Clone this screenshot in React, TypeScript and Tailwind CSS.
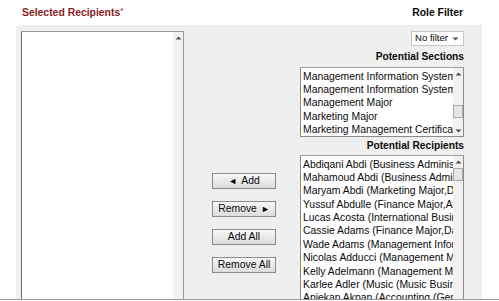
import React from 'react';

const sections = [
  'Management Information Systems Certificate',
  'Management Information Systems Major',
  'Management Major',
  'Marketing Major',
  'Marketing Management Certificate',
];

const recipients = [
  'Abdiqani Abdi (Business Administration)',
  'Mahamoud Abdi (Business Administration)',
  'Maryam Abdi (Marketing Major,Data)',
  'Yussuf Abdulle (Finance Major,Athletics)',
  'Lucas Acosta (International Business)',
  'Cassie Adams (Finance Major,Data)',
  'Wade Adams (Management Information)',
  'Nicolas Adducci (Management Major)',
  'Kelly Adelmann (Management Major)',
  'Karlee Adler (Music (Music Business))',
  'Aniekan Akpan (Accounting (General))',
];

function UpArrow() {
  return (
    <svg width="7" height="4" viewBox="0 0 7 4" className="block">
      <path d="M0.5 3.5 L3.5 0.5 L6.5 3.5 Z" fill="#505050" />
    </svg>
  );
}

function DownArrow() {
  return (
    <svg width="7" height="4" viewBox="0 0 7 4" className="block">
      <path d="M0.5 0.5 L3.5 3.5 L6.5 0.5 Z" fill="#505050" />
    </svg>
  );
}

// thin classic scrollbar, thumbTop = px offset below the up arrow
function ScrollBar({ thumbTop, showThumb = true, showDown = true }: { thumbTop?: number; showThumb?: boolean; showDown?: boolean }) {
  return (
    <div className="flex w-[10px] shrink-0 flex-col items-center bg-[#f1f1f1]">
      <div className="flex h-[11px] w-full items-center justify-center">
        <UpArrow />
      </div>
      <div className="relative w-full flex-1">
        {showThumb && (
          <div
            className="absolute left-[0px] h-[13px] w-[10px] border border-[#a8a8a8] bg-[#e6e6e6]"
            style={{ top: thumbTop }}
          />
        )}
      </div>
      {showDown && (
        <div className="flex h-[11px] w-full items-center justify-center">
          <DownArrow />
        </div>
      )}
    </div>
  );
}

function ListBox({ items, className, thumbTop, showDown }: { items: string[]; className: string; thumbTop: number; showDown: boolean }) {
  return (
    <div className={`flex shrink-0 overflow-hidden border border-[#8a8a8a] border-t-[#a0a0a0] bg-white ${className}`}>
      <div className="min-w-0 flex-1 overflow-hidden pt-[1.5px] pl-[2px]">
        {items.map((t) => (
          <div key={t} className="h-[13.4px] overflow-hidden whitespace-nowrap text-[10.4px] leading-[13.4px] text-[#0a0a0a]">
            {t}
          </div>
        ))}
      </div>
      <ScrollBar thumbTop={thumbTop} showDown={showDown} />
    </div>
  );
}

function MoveButton({ children }: { children: React.ReactNode }) {
  return (
    <button className="flex h-[16px] w-[64px] items-center justify-center whitespace-nowrap border border-[#8c8c8c] bg-gradient-to-b from-[#f7f7f7] to-[#dcdcdc] text-[10.4px] leading-none text-[#0a0a0a]">
      {children}
    </button>
  );
}

export default function App() {
  return (
    <div className="h-[301px] w-[499px] overflow-hidden bg-white font-['Liberation_Sans',Arial,sans-serif]">
      {/* header row */}
      <div className="flex h-[25px] items-center justify-between pr-[36px] pl-[22px] text-[10.4px] font-bold">
        <div className="text-[#8b1d1d]">
          Selected Recipients<span className="align-top text-[8px] text-[#d04040]">*</span>
        </div>
        <div className="text-[#0a0a0a]">Role Filter</div>
      </div>

      {/* gray panel */}
      <div className="ml-[16px] flex h-[274px] w-[466px] overflow-hidden bg-[#efefef]">
        {/* selected list */}
        <div className="mt-[6px] ml-[5px] flex h-[300px] w-[163px] shrink-0 border border-[#9a9a9a] border-l-[#6e6e6e] bg-white">
          <div className="flex-1" />
          <ScrollBar showThumb={false} showDown={false} />
        </div>

        {/* move buttons */}
        <div className="ml-[28px] flex w-[64px] shrink-0 flex-col gap-[12px] pt-[148px]">
          <MoveButton>
            <span className="mr-[4px] text-[9px]">◄</span>Add
          </MoveButton>
          <MoveButton>
            Remove<span className="ml-[4px] text-[9px]">►</span>
          </MoveButton>
          <MoveButton>Add All</MoveButton>
          <MoveButton>Remove All</MoveButton>
        </div>

        {/* right column */}
        <div className="ml-[24px] flex w-[164px] shrink-0 flex-col items-end pt-[6px]">
          <div className="flex h-[15px] w-[53px] shrink-0 items-center justify-between whitespace-nowrap border border-[#c6c6c6] bg-white pr-[4px] pl-[3px] text-[9.6px] text-[#0a0a0a]">
            <span>No filter</span>
            <DownArrow />
          </div>
          <div className="flex h-[21px] shrink-0 items-center whitespace-nowrap pt-[1px] text-[10.2px] font-bold text-[#0a0a0a]">Potential Sections</div>
          <ListBox items={sections} className="h-[70px] w-[164px]" thumbTop={26} showDown />
          <div className="flex h-[18px] shrink-0 items-center whitespace-nowrap text-[10.2px] font-bold text-[#0a0a0a]">Potential Recipients</div>
          <ListBox items={recipients} className="h-[160px] w-[164px]" thumbTop={1} showDown={false} />
        </div>
      </div>

      {/* bottom rule */}
      <div className="h-px w-full bg-[#9a9a9a]" />
    </div>
  );
}
